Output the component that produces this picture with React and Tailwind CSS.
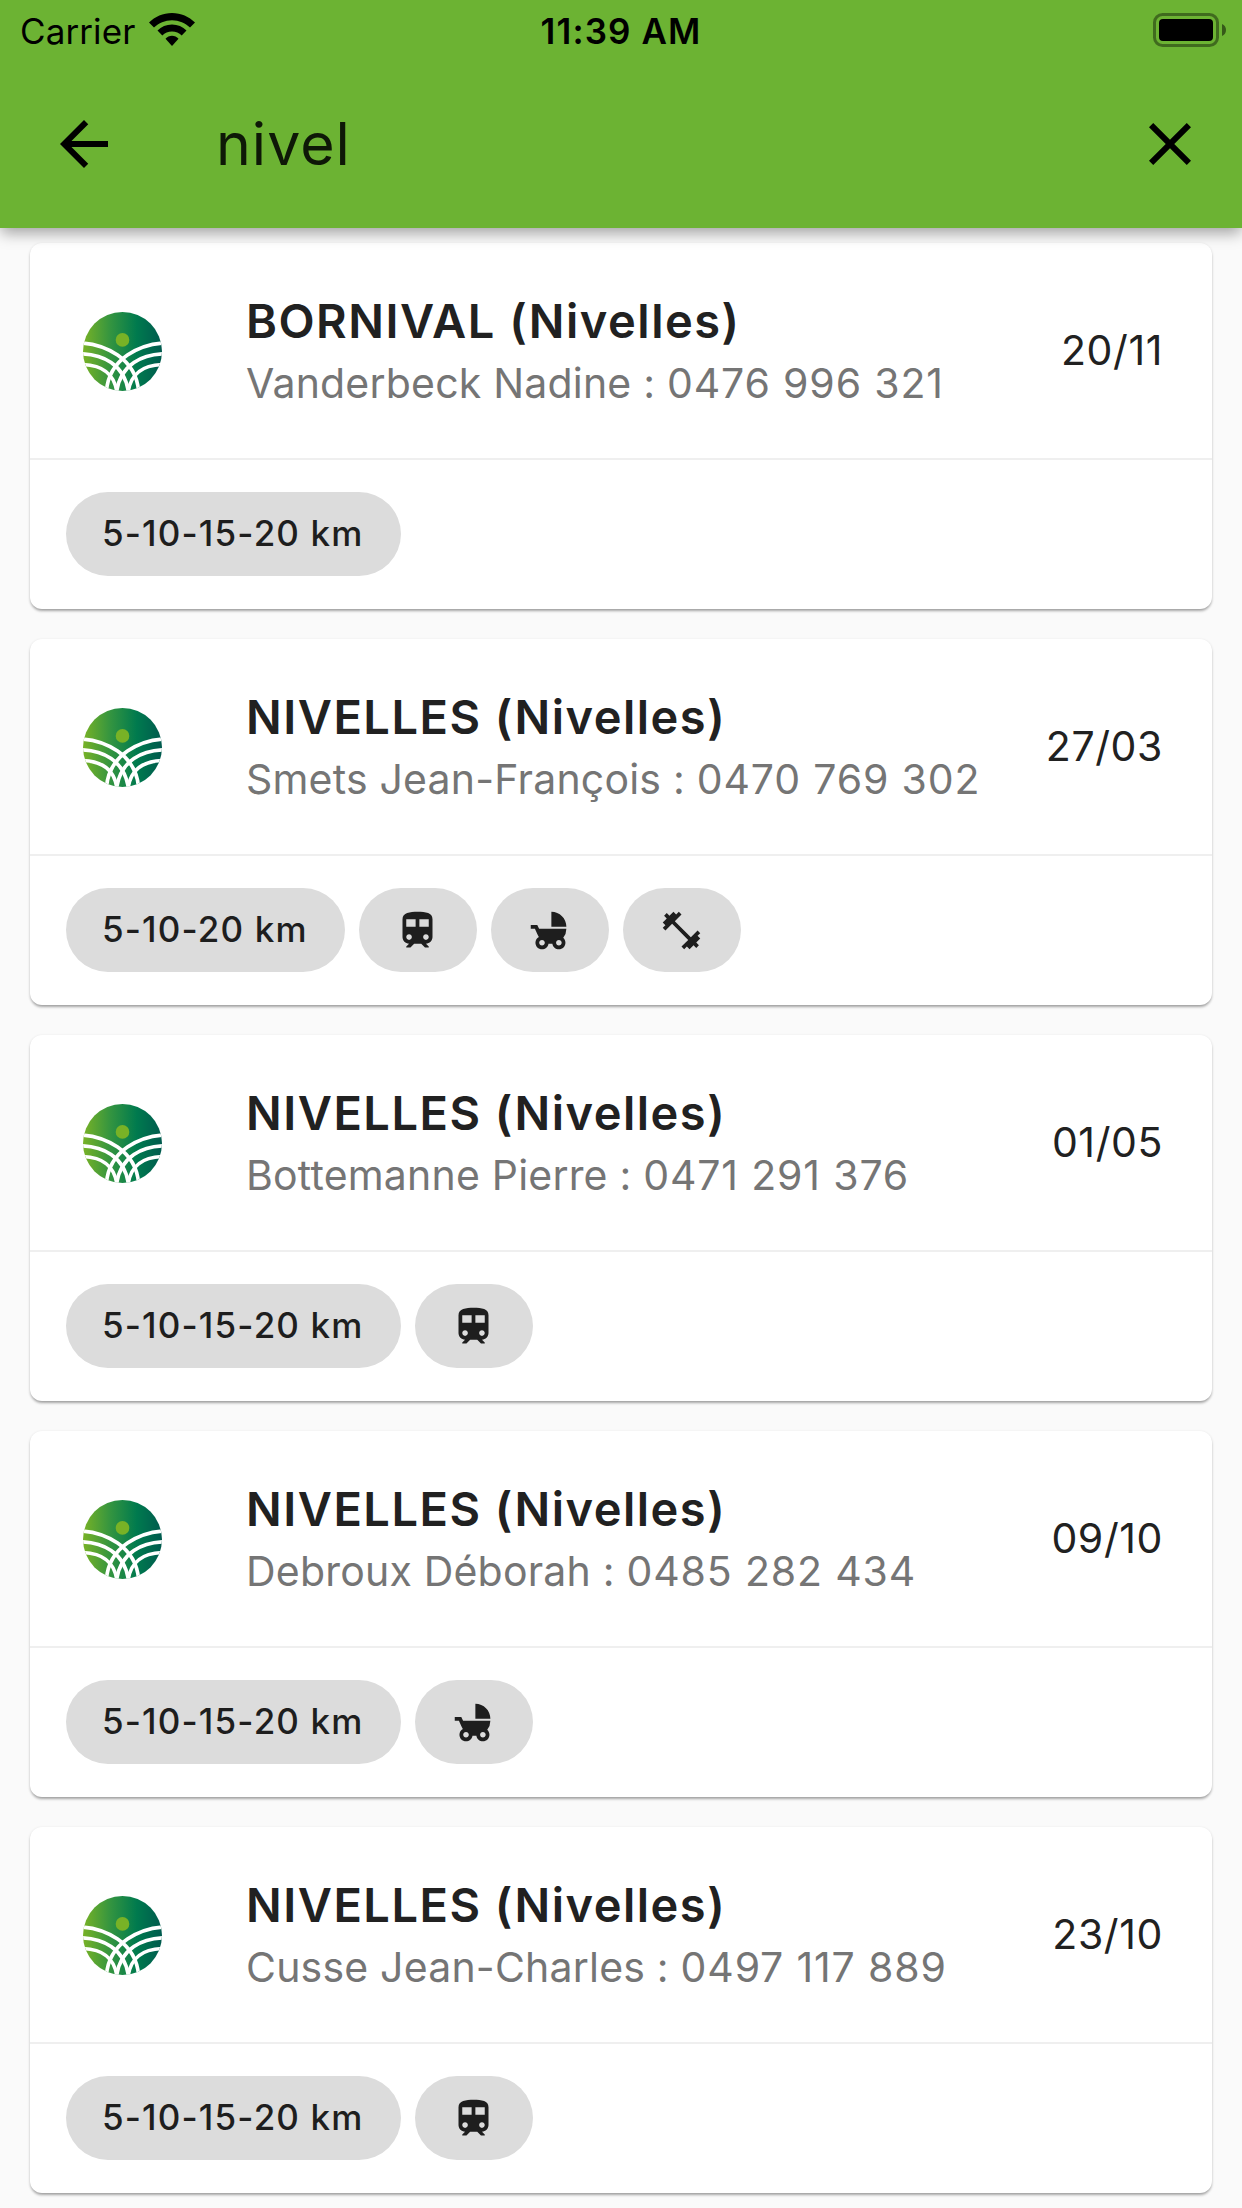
import { MdArrowBack, MdClose, MdTrain, MdChildFriendly, MdFitnessCenter } from "react-icons/md";

const walks = [
  { town: "BORNIVAL (Nivelles)", contact: "Vanderbeck Nadine", phone: "0476 996 321", date: "20/11", km: "5-10-15-20 km", extras: [] },
  { town: "NIVELLES (Nivelles)", contact: "Smets Jean-François", phone: "0470 769 302", date: "27/03", km: "5-10-20 km", extras: ["train", "stroller", "fitness"] },
  { town: "NIVELLES (Nivelles)", contact: "Bottemanne Pierre", phone: "0471 291 376", date: "01/05", km: "5-10-15-20 km", extras: ["train"] },
  { town: "NIVELLES (Nivelles)", contact: "Debroux Déborah", phone: "0485 282 434", date: "09/10", km: "5-10-15-20 km", extras: ["stroller"] },
  { town: "NIVELLES (Nivelles)", contact: "Cusse Jean-Charles", phone: "0497 117 889", date: "23/10", km: "5-10-15-20 km", extras: ["train"] },
];

const icons = { train: MdTrain, stroller: MdChildFriendly, fitness: MdFitnessCenter };

function Logo() {
  const arcs = (
    <>
      <path d="M30 129C100 132 205 172 208 285" />
      <path d="M30 162C95 163 168 190 178 285" />
      <path d="M38 194C98 196 137 220 143 285" />
    </>
  );
  return (
    <svg viewBox="40 36 238 238" className="mt-0.5 size-[79px] shrink-0">
      <defs>
        <linearGradient id="field" x1="0" x2="1" y1="0" y2="0">
          <stop offset="0" stopColor="#78b226" />
          <stop offset="0.35" stopColor="#339440" />
          <stop offset="0.68" stopColor="#007a4e" />
          <stop offset="1" stopColor="#005a4e" />
        </linearGradient>
        <clipPath id="disc">
          <circle cx="159" cy="155" r="119" />
        </clipPath>
      </defs>
      <g clipPath="url(#disc)">
        <rect x="40" y="36" width="238" height="238" fill="url(#field)" />
        <circle cx="159" cy="120" r="20.5" fill="#78b226" />
        <g fill="none" stroke="#fff" strokeWidth="11">
          {arcs}
          <g transform="translate(318 0) scale(-1 1)">{arcs}</g>
        </g>
      </g>
    </svg>
  );
}

function StatusBar() {
  return (
    <div className="flex h-[60px] items-start justify-between pl-5 pr-4 text-[35px] leading-[62px] text-black">
      <div className="flex w-[396px] items-start gap-[14px]">
        <span className="tracking-[0.1px]">Carrier</span>
        <svg viewBox="0 0 46 34" className="mt-[13px] h-[34px] w-[46px]">
          <path d="M23 0C14 0 6 3.600 0 9.500L5 14.600C9.700 10 16 7.200 23 7.200S36.300 10 41 14.600L46 9.500C40 3.600 32 0 23 0Z" />
          <path d="M23 11.500C17.300 11.500 12.300 13.800 8.500 17.500L13.300 22.500C15.800 20.100 19.200 18.600 23 18.600S30.200 20.100 32.700 22.500L37.500 17.500C33.700 13.800 28.700 11.500 23 11.500Z" />
          <path d="M23 22.700C20.500 22.700 18.200 23.700 16.500 25.800L23 33L29.500 25.800C27.800 23.700 25.500 22.700 23 22.700Z" />
        </svg>
      </div>
      <span className="font-semibold tracking-[1.100px]">11:39 AM</span>
      <div className="flex w-[400px] justify-end">
        <svg viewBox="0 0 73 34" className="mt-[13px] h-[34px] w-[73px]">
          <rect x="1.500" y="1.500" width="63" height="31" rx="8" fill="none" stroke="#000" strokeOpacity="0.4" strokeWidth="3" />
          <rect x="6" y="6" width="54" height="22" rx="4" />
          <path d="M69 11C71.500 12 73 14.200 73 17S71.500 22 69 23Z" fillOpacity="0.5" />
        </svg>
      </div>
    </div>
  );
}

function WalkCard({ walk }) {
  return (
    <article className="h-[366px] rounded-[12px] bg-white text-[#212121] shadow-[0_3px_3px_-1px_rgba(0,0,0,0.28),0_1px_3px_rgba(0,0,0,0.16)]">
      <div className="flex h-[217px] items-center border-b-2 border-[#efefef] pl-[53px] pr-[49px]">
        <Logo />
        <div className="ml-[84px] flex-1 whitespace-nowrap">
          <h2 className="text-[47px] font-semibold leading-[64px] tracking-[1.500px]">{walk.town}</h2>
          <p className="text-[41px] leading-[60px] tracking-[0.200px] text-[#757575]">
            {walk.contact} : <span className="tracking-[0.850px]">{walk.phone}</span>
          </p>
        </div>
        <span className="text-[41px] tracking-[0.600px]">{walk.date}</span>
      </div>
      <div className="flex gap-[14px] pl-9 pt-8">
        <span className="flex h-[84px] items-center whitespace-nowrap rounded-full bg-[#dcdcdc] pl-9 pr-[37px] pb-px text-[35px] font-medium tracking-[1.150px] text-[#1e1e1e]">
          {walk.km}
        </span>
        {walk.extras.map((name) => {
          const Icon = icons[name];
          return (
            <span key={name} className="flex h-[84px] w-[118px] items-center justify-center rounded-full bg-[#dcdcdc]">
              <Icon className="size-[45px] text-[#1e1e1e]" />
            </span>
          );
        })}
      </div>
    </article>
  );
}

export default function App() {
  return (
    <div className="h-[2208px] w-[1242px] overflow-hidden bg-[#fafafa] font-['Inter','Liberation_Sans',sans-serif]">
      <header className="relative z-10 h-[228px] bg-[#6cb333] shadow-[0_6px_14px_-1px_rgba(0,0,0,0.36)]">
        <StatusBar />
        <div className="flex h-[168px] items-center pl-12 pr-9">
          <MdArrowBack className="size-[72px] text-black" />
          <span className="ml-[96px] flex-1 text-[59px] leading-[72px] tracking-[1px] text-[#0e1807]">nivel</span>
          <MdClose className="size-[72px] text-black" />
        </div>
      </header>
      <main className="flex flex-col gap-[30px] px-[30px] pt-[15px]">
        {walks.map((walk, i) => (
          <WalkCard key={i} walk={walk} />
        ))}
      </main>
    </div>
  );
}
